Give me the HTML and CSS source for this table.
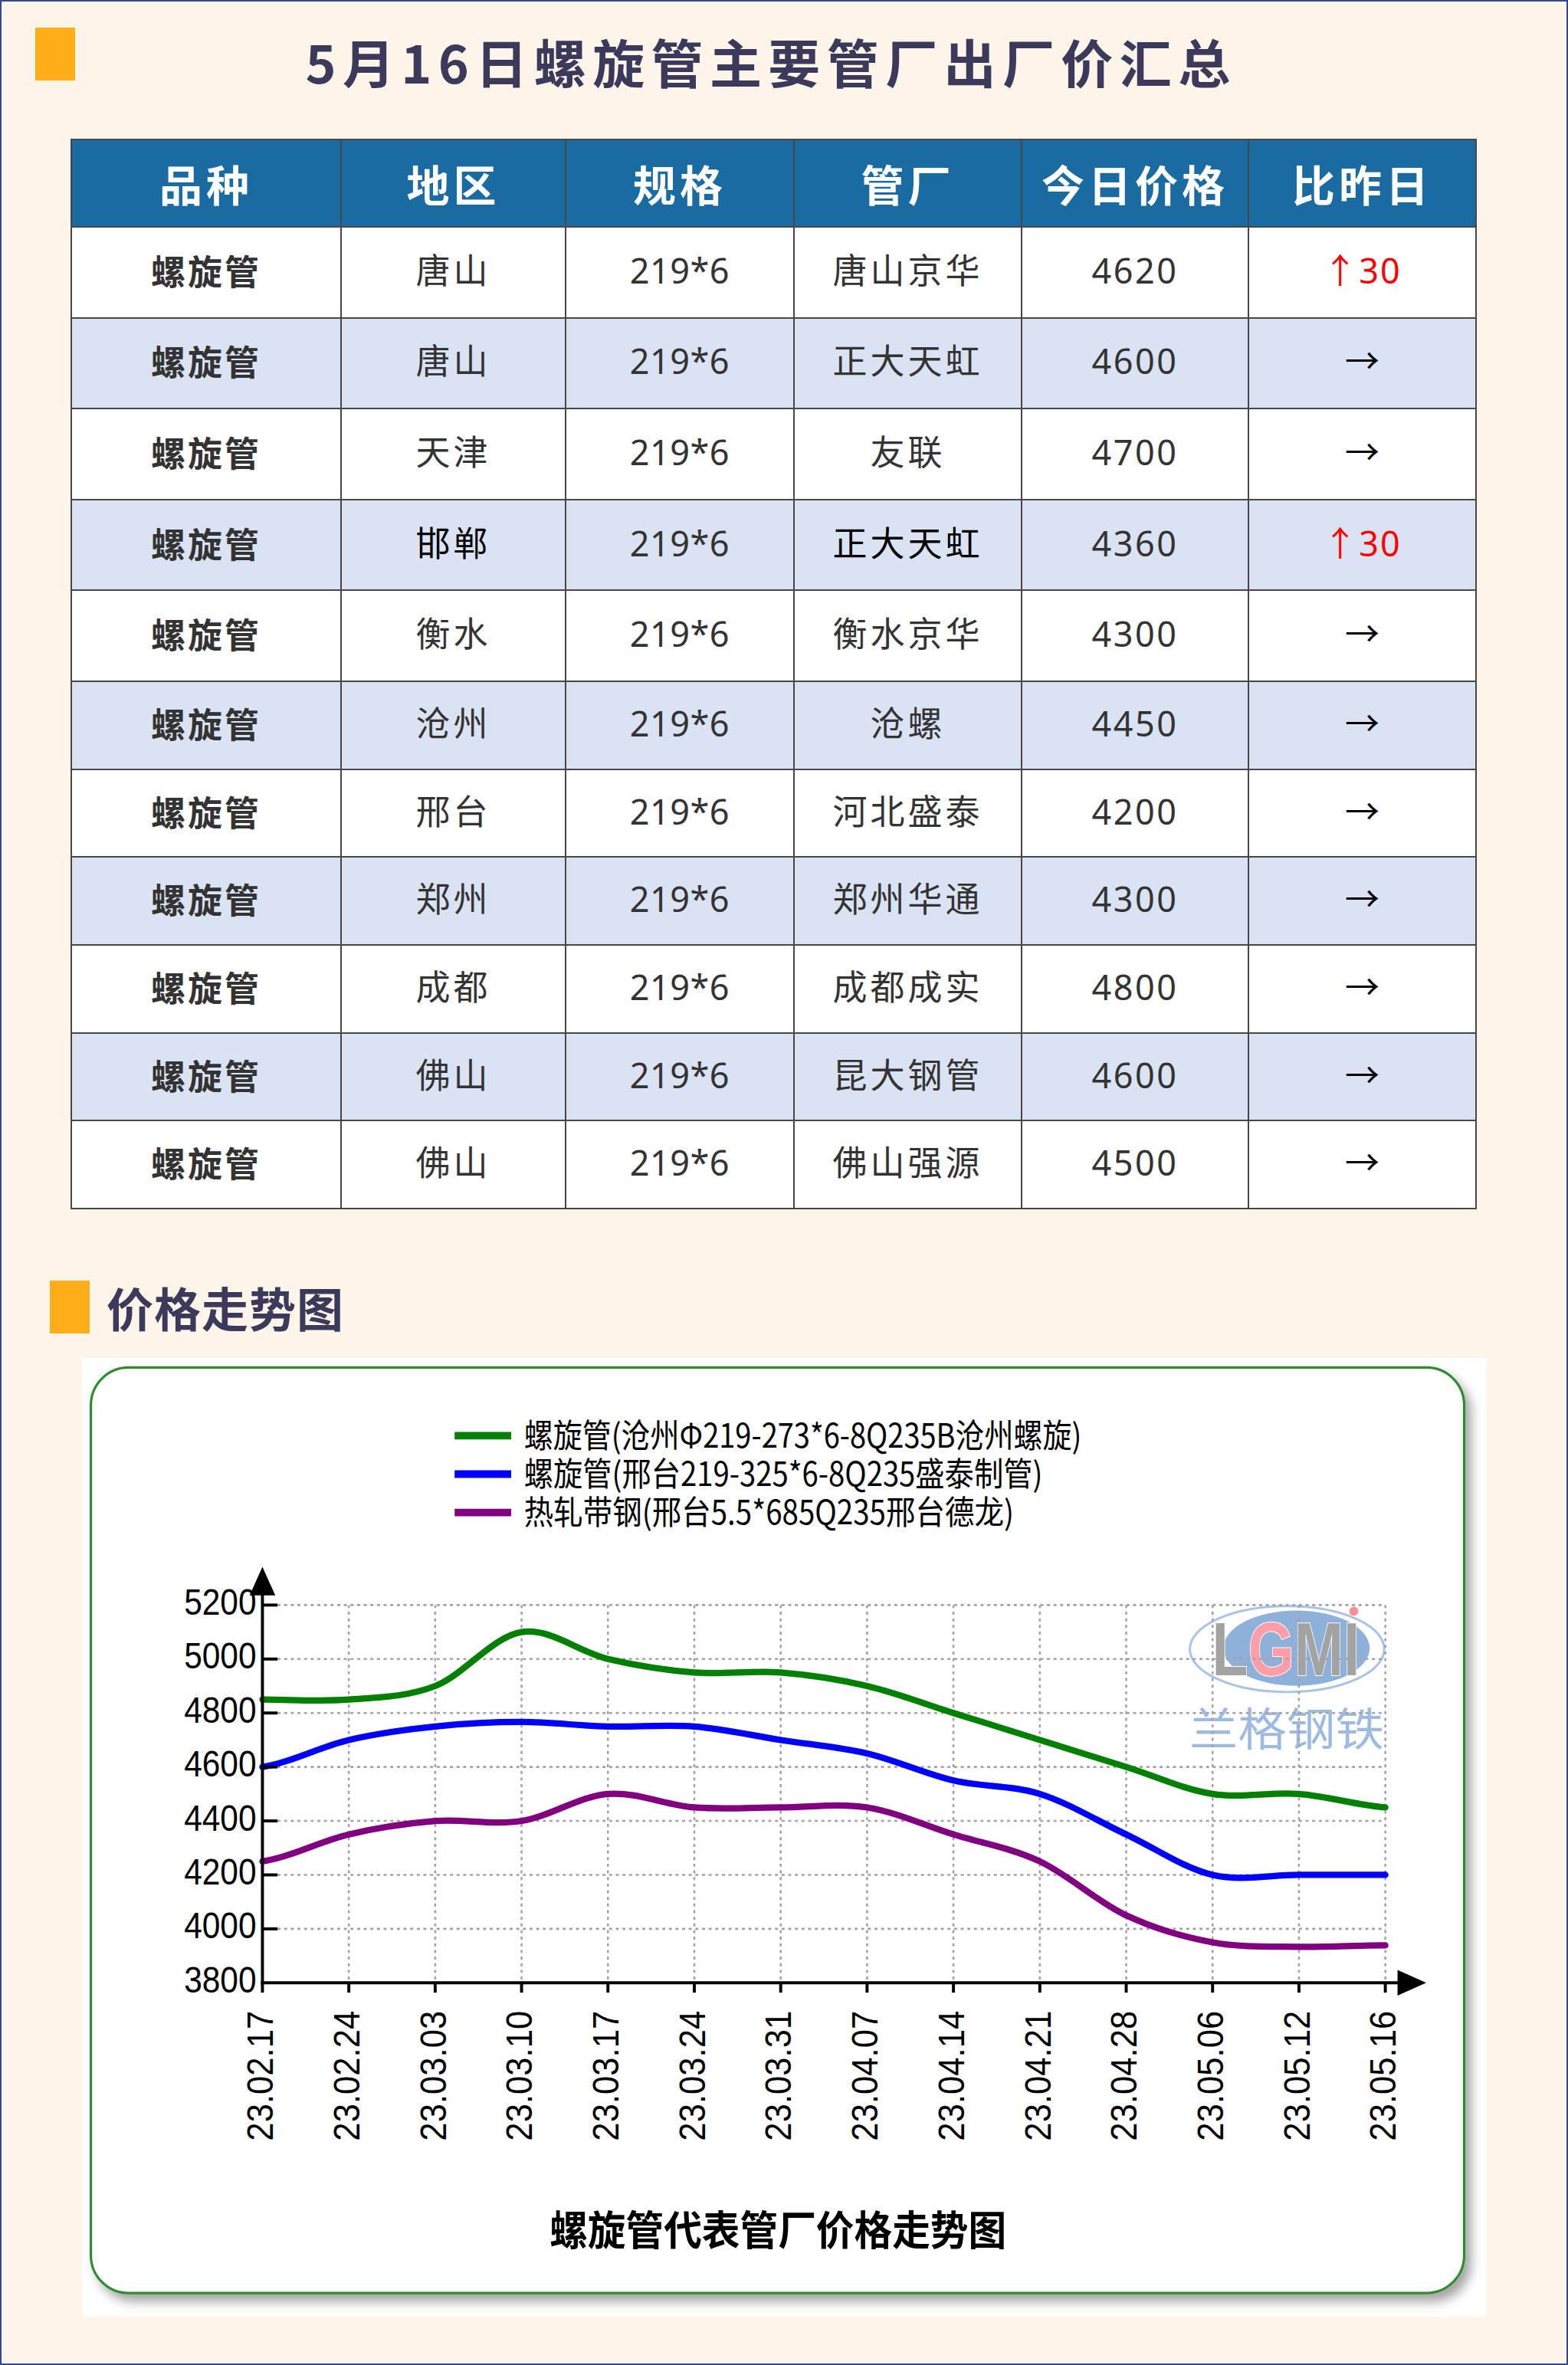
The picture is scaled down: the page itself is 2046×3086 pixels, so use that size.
FILE: index.html
```html
<!DOCTYPE html>
<html lang="zh-CN">
<head>
<meta charset="utf-8">
<title>5月16日螺旋管主要管厂出厂价汇总</title>
<link rel="stylesheet" href="styles.css">
</head>
<body>
<div class="page">
  <header class="title-bar">
    <span class="mark"></span>
    <h1 class="title">5月16日螺旋管主要管厂出厂价汇总</h1>
  </header>

  <table class="price-table">
    <colgroup>
      <col class="c1"><col class="c2"><col class="c3"><col class="c4"><col class="c5"><col class="c6">
    </colgroup>
    <thead>
      <tr><th>品种</th><th>地区</th><th>规格</th><th>管厂</th><th>今日价格</th><th>比昨日</th></tr>
    </thead>
    <tbody>
      <tr class="t"><td class="kind">螺旋管</td><td>唐山</td><td>219*6</td><td>唐山京华</td><td>4620</td><td class="up">↑30</td></tr>
      <tr class="t"><td class="kind">螺旋管</td><td>唐山</td><td>219*6</td><td>正大天虹</td><td>4600</td><td class="flat">→</td></tr>
      <tr class="t"><td class="kind">螺旋管</td><td>天津</td><td>219*6</td><td>友联</td><td>4700</td><td class="flat">→</td></tr>
      <tr class="t"><td class="kind">螺旋管</td><td class="dark">邯郸</td><td>219*6</td><td class="dark">正大天虹</td><td>4360</td><td class="up">↑30</td></tr>
      <tr class="t"><td class="kind">螺旋管</td><td>衡水</td><td>219*6</td><td>衡水京华</td><td>4300</td><td class="flat">→</td></tr>
      <tr class="s"><td class="kind">螺旋管</td><td>沧州</td><td>219*6</td><td>沧螺</td><td>4450</td><td class="flat">→</td></tr>
      <tr class="s"><td class="kind">螺旋管</td><td>邢台</td><td>219*6</td><td>河北盛泰</td><td>4200</td><td class="flat">→</td></tr>
      <tr class="s"><td class="kind">螺旋管</td><td>郑州</td><td>219*6</td><td>郑州华通</td><td>4300</td><td class="flat">→</td></tr>
      <tr class="s"><td class="kind">螺旋管</td><td>成都</td><td>219*6</td><td>成都成实</td><td>4800</td><td class="flat">→</td></tr>
      <tr class="s"><td class="kind">螺旋管</td><td>佛山</td><td>219*6</td><td>昆大钢管</td><td>4600</td><td class="flat">→</td></tr>
      <tr class="s"><td class="kind">螺旋管</td><td>佛山</td><td>219*6</td><td>佛山强源</td><td>4500</td><td class="flat">→</td></tr>
    </tbody>
  </table>

  <div class="section-title">
    <span class="mark"></span>
    <h2>价格走势图</h2>
  </div>

  <svg class="chart" viewBox="54.5 899.5 931.5 636" xmlns="http://www.w3.org/2000/svg" role="img" aria-label="螺旋管代表管厂价格走势图">
    <defs>
      <filter id="frameShadow" x="-3%" y="-3%" width="108%" height="110%">
        <feDropShadow dx="4" dy="5" stdDeviation="3.5" flood-color="#000" flood-opacity="0.35"/>
      </filter>
    </defs>
    <rect class="bg" x="54.5" y="899.5" width="931.5" height="636"/>
    <rect class="frame" x="60.2" y="905.8" width="911" height="614" rx="25" filter="url(#frameShadow)"/>

    <g class="legend">
      <line class="s-green" x1="301.5" y1="951" x2="339" y2="951"/>
      <line class="s-blue" x1="301.5" y1="976.5" x2="339" y2="976.5"/>
      <line class="s-purple" x1="301.5" y1="1002" x2="339" y2="1002"/>
      <text x="347.5" y="958.8" textLength="370" lengthAdjust="spacingAndGlyphs">螺旋管(沧州Φ219-273*6-8Q235B沧州螺旋)</text>
      <text x="347.5" y="984.3" textLength="344" lengthAdjust="spacingAndGlyphs">螺旋管(邢台219-325*6-8Q235盛泰制管)</text>
      <text x="347.5" y="1009.8" textLength="325" lengthAdjust="spacingAndGlyphs">热轧带钢(邢台5.5*685Q235邢台德龙)</text>
    </g>

    <g class="logo">
      <ellipse class="ring" cx="853.7" cy="1092.6" rx="64.5" ry="28.5"/>
      <ellipse class="disc" cx="860" cy="1092" rx="48.5" ry="25"/>
      <text class="lgmi" x="804" y="1110" textLength="98" lengthAdjust="spacingAndGlyphs">L<tspan class="g">G</tspan>MI</text>
      <circle class="dot" cx="898" cy="1067.5" r="3"/>
      <text class="cn" x="789" y="1157" textLength="129" lengthAdjust="spacingAndGlyphs">兰格钢铁</text>
    </g>

    <g class="grid">
      <line x1="184" y1="1063.4" x2="919" y2="1063.4"/>
      <line x1="184" y1="1099.2" x2="919" y2="1099.2"/>
      <line x1="184" y1="1135" x2="919" y2="1135"/>
      <line x1="184" y1="1170.8" x2="919" y2="1170.8"/>
      <line x1="184" y1="1206.6" x2="919" y2="1206.6"/>
      <line x1="184" y1="1242.4" x2="919" y2="1242.4"/>
      <line x1="184" y1="1278.2" x2="919" y2="1278.2"/>
      <line x1="231.3" y1="1063.4" x2="231.3" y2="1314"/>
      <line x1="288.6" y1="1063.4" x2="288.6" y2="1314"/>
      <line x1="345.9" y1="1063.4" x2="345.9" y2="1314"/>
      <line x1="403.2" y1="1063.4" x2="403.2" y2="1314"/>
      <line x1="460.5" y1="1063.4" x2="460.5" y2="1314"/>
      <line x1="517.8" y1="1063.4" x2="517.8" y2="1314"/>
      <line x1="575.1" y1="1063.4" x2="575.1" y2="1314"/>
      <line x1="632.4" y1="1063.4" x2="632.4" y2="1314"/>
      <line x1="689.7" y1="1063.4" x2="689.7" y2="1314"/>
      <line x1="747" y1="1063.4" x2="747" y2="1314"/>
      <line x1="804.3" y1="1063.4" x2="804.3" y2="1314"/>
      <line x1="861.6" y1="1063.4" x2="861.6" y2="1314"/>
      <line x1="918.9" y1="1063.4" x2="918.9" y2="1314"/>
    </g>

    <g class="series" transform="matrix(1.005263 0 0 0.99444 -1.921 8.30)">
      <path class="s-green" d="M175,1124 C194,1124 213,1125.5 232,1124 C251,1122.5 270,1122.5 289,1115 C308,1107.5 327,1082 346,1079 C365,1076 384,1092.5 403,1097 C422,1101.5 441,1104.5 460,1106 C479,1107.5 498,1104.5 517,1106 C536,1107.5 555,1110.5 574,1115 C593,1119.5 612,1127 631,1133 C650,1139 669,1145 688,1151 C707,1157 726,1163 745,1169 C764,1175 783,1184 802,1187 C821,1190 840,1185.5 859,1187 C878,1188.5 897,1194.5 916,1196"/>
      <path class="s-blue" d="M175,1169 C194,1166 213,1155.5 232,1151 C251,1146.5 270,1144 289,1142 C308,1140 327,1139 346,1139 C365,1139 384,1141.5 403,1142 C422,1142.5 441,1140.5 460,1142 C479,1143.5 498,1148 517,1151 C536,1154 555,1155.5 574,1160 C593,1164.5 612,1173.5 631,1178 C650,1182.5 669,1181 688,1187 C707,1193 726,1205 745,1214 C764,1223 783,1236.5 802,1241 C821,1245.5 840,1241 859,1241 C878,1241 897,1241 916,1241"/>
      <path class="s-purple" d="M175,1232 C194,1229 213,1218.5 232,1214 C251,1209.5 270,1206.5 289,1205 C308,1203.5 327,1208 346,1205 C365,1202 384,1188.5 403,1187 C422,1185.5 441,1194.5 460,1196 C479,1197.5 498,1196 517,1196 C536,1196 555,1193 574,1196 C593,1199 612,1208 631,1214 C650,1220 669,1223 688,1232 C707,1241 726,1259 745,1268 C764,1277 783,1282.5 802,1286 C821,1289.5 840,1288.7 859,1289 C878,1289.3 897,1288 916,1288"/>
    </g>

    <g class="axis">
      <line x1="174" y1="1315" x2="174" y2="1055"/>
      <line x1="173" y1="1314" x2="929" y2="1314"/>
      <polygon points="174,1038 165.5,1057 182.5,1057"/>
      <polygon points="946,1314 927,1305.5 927,1322.5"/>
      <line x1="174" y1="1063.4" x2="184" y2="1063.4"/>
      <line x1="174" y1="1099.2" x2="184" y2="1099.2"/>
      <line x1="174" y1="1135" x2="184" y2="1135"/>
      <line x1="174" y1="1170.8" x2="184" y2="1170.8"/>
      <line x1="174" y1="1206.6" x2="184" y2="1206.6"/>
      <line x1="174" y1="1242.4" x2="184" y2="1242.4"/>
      <line x1="174" y1="1278.2" x2="184" y2="1278.2"/>
      <line x1="174" y1="1314" x2="174" y2="1320.5"/>
      <line x1="231.3" y1="1314" x2="231.3" y2="1320.5"/>
      <line x1="288.6" y1="1314" x2="288.6" y2="1320.5"/>
      <line x1="345.9" y1="1314" x2="345.9" y2="1320.5"/>
      <line x1="403.2" y1="1314" x2="403.2" y2="1320.5"/>
      <line x1="460.5" y1="1314" x2="460.5" y2="1320.5"/>
      <line x1="517.8" y1="1314" x2="517.8" y2="1320.5"/>
      <line x1="575.1" y1="1314" x2="575.1" y2="1320.5"/>
      <line x1="632.4" y1="1314" x2="632.4" y2="1320.5"/>
      <line x1="689.7" y1="1314" x2="689.7" y2="1320.5"/>
      <line x1="747" y1="1314" x2="747" y2="1320.5"/>
      <line x1="804.3" y1="1314" x2="804.3" y2="1320.5"/>
      <line x1="861.6" y1="1314" x2="861.6" y2="1320.5"/>
      <line x1="918.9" y1="1314" x2="918.9" y2="1320.5"/>
    </g>

    <g class="ylabels">
      <text x="170" y="1069.8" textLength="48" lengthAdjust="spacingAndGlyphs">5200</text>
      <text x="170" y="1105.6" textLength="48" lengthAdjust="spacingAndGlyphs">5000</text>
      <text x="170" y="1141.4" textLength="48" lengthAdjust="spacingAndGlyphs">4800</text>
      <text x="170" y="1177.2" textLength="48" lengthAdjust="spacingAndGlyphs">4600</text>
      <text x="170" y="1213" textLength="48" lengthAdjust="spacingAndGlyphs">4400</text>
      <text x="170" y="1248.8" textLength="48" lengthAdjust="spacingAndGlyphs">4200</text>
      <text x="170" y="1284.6" textLength="48" lengthAdjust="spacingAndGlyphs">4000</text>
      <text x="170" y="1320.4" textLength="48" lengthAdjust="spacingAndGlyphs">3800</text>
    </g>

    <g class="xlabels">
      <text transform="translate(181,1332.5) rotate(-90)" textLength="86.4" lengthAdjust="spacingAndGlyphs">23.02.17</text>
      <text transform="translate(238.3,1332.5) rotate(-90)" textLength="86.4" lengthAdjust="spacingAndGlyphs">23.02.24</text>
      <text transform="translate(295.6,1332.5) rotate(-90)" textLength="86.4" lengthAdjust="spacingAndGlyphs">23.03.03</text>
      <text transform="translate(352.9,1332.5) rotate(-90)" textLength="86.4" lengthAdjust="spacingAndGlyphs">23.03.10</text>
      <text transform="translate(410.2,1332.5) rotate(-90)" textLength="86.4" lengthAdjust="spacingAndGlyphs">23.03.17</text>
      <text transform="translate(467.5,1332.5) rotate(-90)" textLength="86.4" lengthAdjust="spacingAndGlyphs">23.03.24</text>
      <text transform="translate(524.8,1332.5) rotate(-90)" textLength="86.4" lengthAdjust="spacingAndGlyphs">23.03.31</text>
      <text transform="translate(582.1,1332.5) rotate(-90)" textLength="86.4" lengthAdjust="spacingAndGlyphs">23.04.07</text>
      <text transform="translate(639.4,1332.5) rotate(-90)" textLength="86.4" lengthAdjust="spacingAndGlyphs">23.04.14</text>
      <text transform="translate(696.7,1332.5) rotate(-90)" textLength="86.4" lengthAdjust="spacingAndGlyphs">23.04.21</text>
      <text transform="translate(754,1332.5) rotate(-90)" textLength="86.4" lengthAdjust="spacingAndGlyphs">23.04.28</text>
      <text transform="translate(811.3,1332.5) rotate(-90)" textLength="86.4" lengthAdjust="spacingAndGlyphs">23.05.06</text>
      <text transform="translate(868.6,1332.5) rotate(-90)" textLength="86.4" lengthAdjust="spacingAndGlyphs">23.05.12</text>
      <text transform="translate(925.9,1332.5) rotate(-90)" textLength="86.4" lengthAdjust="spacingAndGlyphs">23.05.16</text>
    </g>

    <text class="chart-title" x="364.5" y="1488" textLength="303" lengthAdjust="spacingAndGlyphs">螺旋管代表管厂价格走势图</text>
  </svg>
</div>
</body>
</html>
```

FILE: styles.css
```css
html, body {
  margin: 0;
  padding: 0;
  background: #fdf5ea;
}

body {
  font-family: "Noto Sans", "Noto Sans CJK SC", sans-serif;
}

.page {
  width: 2046px;
  height: 3086px;
  box-sizing: border-box;
  border: 2px solid #2c4d8c;
  background: #fdf5ea;
  overflow: hidden;
}

/* ---------- title ---------- */
.title-bar {
  height: 179px;
  box-sizing: border-box;
  padding: 34px 130px 0 44px;
  display: flex;
  align-items: flex-start;
}

.mark {
  flex: none;
  width: 52px;
  height: 69px;
  background: #ffae19;
}

.title {
  flex: 1;
  margin: 10px 0 0;
  text-align: center;
  font-family: "Noto Sans CJK SC", sans-serif;
  font-weight: 700;
  font-size: 68px;
  line-height: 68px;
  letter-spacing: 8.4px;
  color: #3b3a5b;
}

/* ---------- table ---------- */
.price-table {
  margin-left: 90px;
  width: 1833px;
  border-collapse: collapse;
  table-layout: fixed;
}

.price-table .c1 { width: 352px; }
.price-table .c2 { width: 293px; }
.price-table .c3 { width: 298px; }
.price-table .c4 { width: 297px; }
.price-table .c5 { width: 296px; }
.price-table .c6 { width: 297px; }

.price-table th,
.price-table td {
  border: 2px solid #474747;
  padding: 0;
  text-align: center;
  vertical-align: middle;
}

.price-table thead tr { height: 114px; }

.price-table th {
  background: #1b6ba3;
  color: #ffffff;
  font-family: "Noto Sans CJK SC", sans-serif;
  font-weight: 700;
  font-size: 56px;
  line-height: 1;
  letter-spacing: 5px;
}

.price-table tbody tr.t { height: 118.6px; }
.price-table tbody tr.s { height: 114.7px; }

.price-table tbody tr { background: #ffffff; }
.price-table tbody tr:nth-child(even) { background: #dae3f3; }

.price-table td {
  padding-bottom: 6px;
  font-size: 45px;
  line-height: 1;
  letter-spacing: 4px;
  color: #333333;
}

.price-table td:nth-child(3) { letter-spacing: 0.5px; }
.price-table td:nth-child(5) { letter-spacing: 2.5px; }

.price-table td.kind {
  font-family: "Noto Sans CJK SC", sans-serif;
  font-weight: 700;
  letter-spacing: 3px;
}

.price-table td.dark { color: #000000; }
.price-table td.up { color: #ff0000; letter-spacing: 2px; }
.price-table td.flat { color: #000000; letter-spacing: 0; }

/* ---------- section heading ---------- */
.section-title {
  display: flex;
  align-items: center;
  gap: 22px;
  height: 69px;
  margin: 93px 0 0 63px;
}

.section-title h2 {
  margin: 0;
  font-family: "Noto Sans CJK SC", sans-serif;
  font-weight: 700;
  font-size: 61px;
  line-height: 61px;
  letter-spacing: 1px;
  color: #3b3a5b;
}

/* ---------- chart ---------- */
.chart {
  display: block;
  width: 1833px;
  height: 1251px;
  margin: 32px 0 0 105px;
}

.chart .bg { fill: #ffffff; }
.chart .frame { fill: #ffffff; stroke: #2e8b2e; stroke-width: 1.6; }

.chart text {
  font-family: "Noto Sans CJK SC", sans-serif;
  fill: #000000;
}

.legend line { stroke-width: 5; }
.legend text { font-size: 22px; }

.s-green { stroke: #008000; }
.s-blue { stroke: #0000ff; }
.s-purple { stroke: #800080; }

.series path {
  fill: none;
  stroke-width: 4.2;
  stroke-linecap: round;
  stroke-linejoin: round;
}

.grid line {
  stroke: #a3a3a3;
  stroke-width: 1.3;
  stroke-dasharray: 2 2.4;
}

.axis line { stroke: #000000; stroke-width: 2; }
.axis polygon { fill: #000000; }

.ylabels text {
  font-family: "Liberation Sans", sans-serif;
  font-size: 24px;
  text-anchor: end;
}

.xlabels text {
  font-family: "Liberation Sans", sans-serif;
  font-size: 24px;
  text-anchor: end;
}

.chart .chart-title {
  font-size: 27px;
  font-weight: 700;
}

.logo .ring { fill: none; stroke: #a9c3e6; stroke-width: 1.5; }
.logo .disc { fill: #8fb0d9; }
.logo .dot { fill: #ff8f99; }

.chart .logo .lgmi {
  font-family: "Liberation Sans", sans-serif;
  font-weight: 700;
  font-size: 50px;
  fill: #a3a3a3;
  stroke: #ffffff;
  stroke-width: 1;
  paint-order: stroke;
}

.chart .logo .lgmi .g { fill: #ff9ea6; }

.chart .logo .cn {
  font-size: 30px;
  font-weight: 400;
  fill: #9dbbe0;
}
```
